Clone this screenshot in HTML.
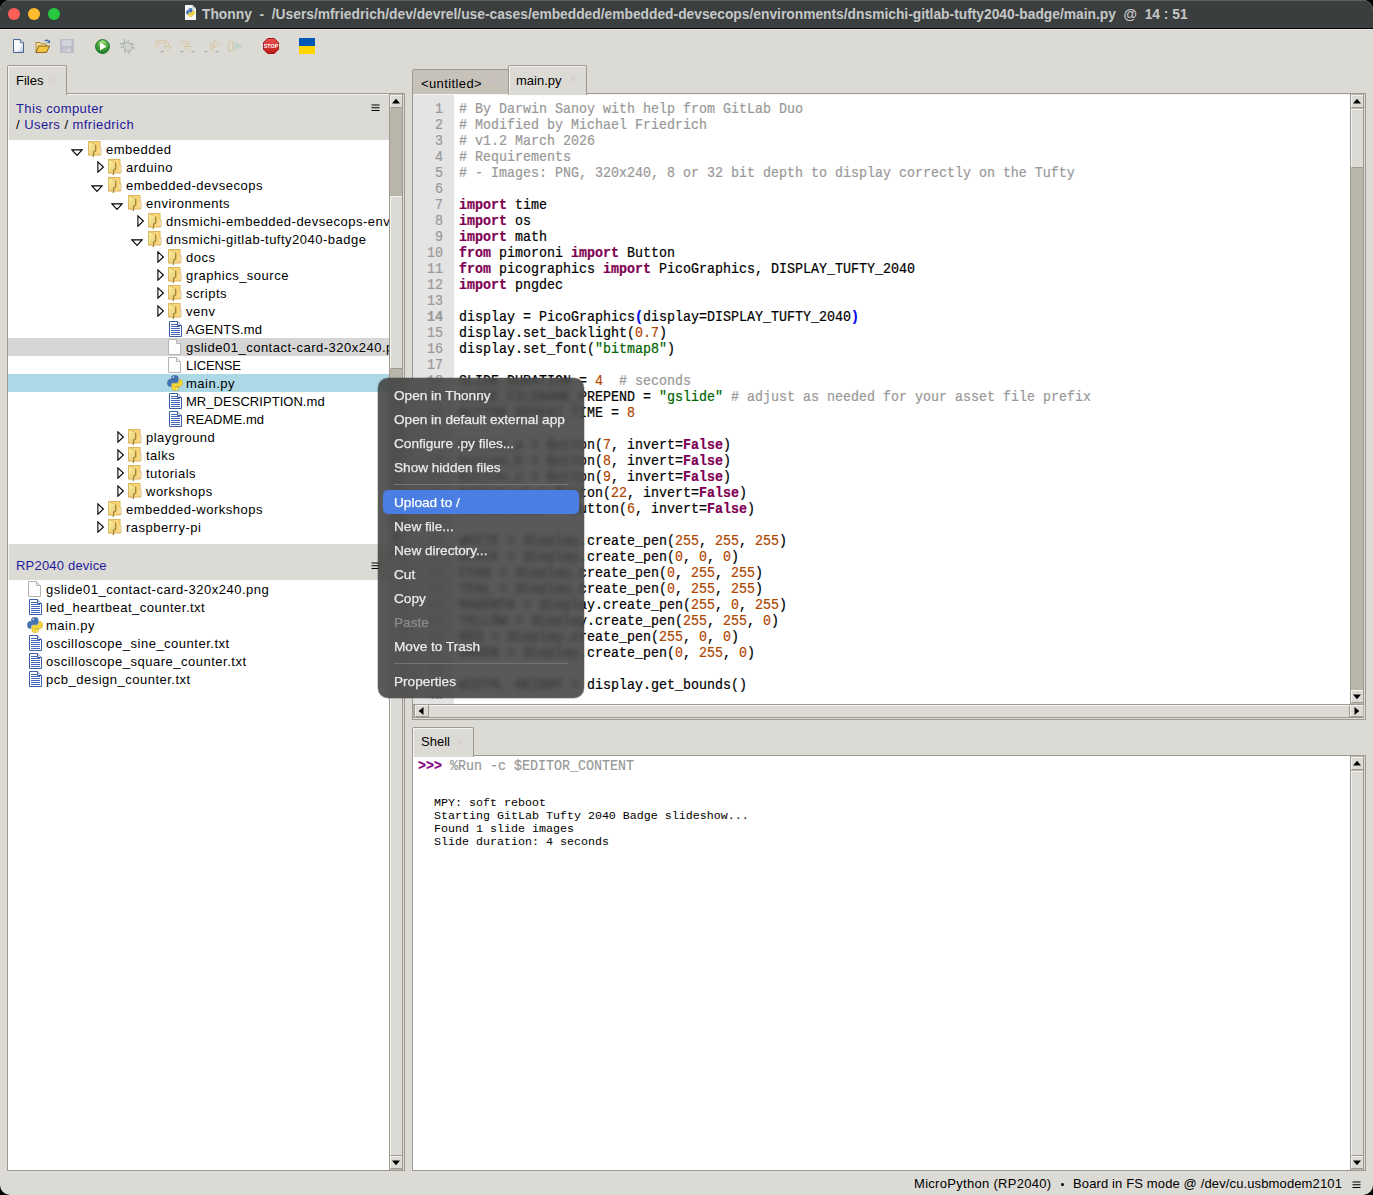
<!DOCTYPE html><html><head><meta charset="utf-8"><style>

*{box-sizing:border-box}
html,body{margin:0;padding:0;background:#000}
body{width:1373px;height:1195px;position:relative;overflow:hidden;font-family:'Liberation Sans', sans-serif;}
svg{display:block}
.a{position:absolute}
.t{position:absolute;white-space:pre;line-height:18px}
.code{position:absolute;font-family:'Liberation Mono', monospace;font-size:13.33px;line-height:14.2857px;white-space:pre;color:#000;transform:scaleY(1.12);transform-origin:0 0;-webkit-text-stroke:0.2px currentColor}
.cm{color:#999999}.kw{color:#7f0055;font-weight:bold}.nu{color:#b04600}.st{color:#006400}
.btn{background:#dcdad5;border-top:1px solid #f4f3ef;border-left:1px solid #f4f3ef;border-bottom:1px solid #9e9a91;border-right:0}
.thumb{background:#dcdad5;border-top:1px solid #f4f3ef;border-left:1px solid #f4f3ef;border-bottom:1px solid #9e9a91}
.mi{position:absolute;left:394px;color:#ececec;font-size:13.6px;line-height:18px;white-space:pre;-webkit-text-stroke:0.25px currentColor}
.frame{position:absolute;border:1px solid #9e9a91;background:#dcdad5}
.tab{position:absolute;border:1px solid #9e9a91;border-bottom:none;background:#dcdad5;border-radius:2px 2px 0 0;box-shadow:inset 1px 1px 0 #f4f3ef}

</style></head><body>
<div class="a" style="left:0;top:0;width:1373px;height:1195px;background:#dcdad5;border-radius:10px;overflow:hidden">
<div class="a" style="left:0;top:0;width:1373px;height:29px;background:#3a3e3f;border-top:1px solid #5c6061;border-bottom:1px solid #000"></div>
<div class="a" style="left:8px;top:8px;width:12px;height:12px;border-radius:50%;background:#fe5f57"></div>
<div class="a" style="left:28px;top:8px;width:12px;height:12px;border-radius:50%;background:#febc2e"></div>
<div class="a" style="left:48px;top:8px;width:12px;height:12px;border-radius:50%;background:#28c840"></div>
<svg class="a" style="left:185px;top:5px" width="11" height="15" viewBox="0 0 11 15"><path d="M0 0 L7.5 0 L11 3.5 L11 15 L0 15 Z" fill="#f6f6f6"/><path d="M7.5 0 L7.5 3.5 L11 3.5 Z" fill="#bdbdbd"/></svg>
<div class="a" style="left:186px;top:8px"><svg width="9" height="9" viewBox="0 0 16 16"><path d="M7.8 0.6 C4.4 0.6 4.6 2.1 4.6 2.1 L4.6 3.9 L8 3.9 L8 4.5 L2.9 4.5 C2.9 4.5 0.6 4.3 0.6 7.9 C0.6 11.4 2.6 11.3 2.6 11.3 L4 11.3 L4 9.5 C4 9.5 3.9 7.6 5.9 7.6 L9.3 7.6 C9.3 7.6 11.1 7.6 11.1 5.8 L11.1 2.6 C11.1 2.6 11.4 0.6 7.8 0.6 Z" fill="#4474b4" stroke="#2e5a92" stroke-width="0.6"/><path d="M8.2 15.4 C11.6 15.4 11.4 13.9 11.4 13.9 L11.4 12.1 L8 12.1 L8 11.5 L13.1 11.5 C13.1 11.5 15.4 11.7 15.4 8.1 C15.4 4.6 13.4 4.7 13.4 4.7 L12 4.7 L12 6.5 C12 6.5 12.1 8.4 10.1 8.4 L6.7 8.4 C6.7 8.4 4.9 8.4 4.9 10.2 L4.9 13.4 C4.9 13.4 4.6 15.4 8.2 15.4 Z" fill="#f6d93e" stroke="#c8a200" stroke-width="0.6"/><circle cx="6.2" cy="2.3" r="0.8" fill="#fff"/><circle cx="9.8" cy="13.7" r="0.8" fill="#fff"/></svg></div>
<div class="t" style="left:202px;top:6px;font-size:13.8px;font-weight:bold;color:#c6c8c8;line-height:18px">Thonny  -  /Users/mfriedrich/dev/devrel/use-cases/embedded/embedded-devsecops/environments/dnsmichi-gitlab-tufty2040-badge/main.py  @  14 : 51</div>
<div class="a" style="left:0;top:29px;width:1373px;height:1px;background:#e9e7e3"></div>
<svg class="a" style="left:13px;top:39px" width="11" height="14" viewBox="0 0 12 15"><defs><linearGradient id="gnf" x1="0" y1="0" x2="1" y2="1"><stop offset="0" stop-color="#ffffff"/><stop offset="0.6" stop-color="#f4f6fa"/><stop offset="1" stop-color="#b8c4dc"/></linearGradient></defs><path d="M0.5 0.5 L8 0.5 L11.5 4 L11.5 14.5 L0.5 14.5 Z" fill="url(#gnf)" stroke="#2d4f86" stroke-width="1"/><path d="M8 0.5 L8 4 L11.5 4" fill="#dde4f0" stroke="#2d4f86" stroke-width="0.8"/></svg><svg class="a" style="left:35px;top:39px" width="16" height="14" viewBox="0 0 17 16"><path d="M10.5 2.5 Q12.5 0.2 14.5 2" fill="none" stroke="#3a62a8" stroke-width="1.4"/><path d="M16.5 0.8 L16.5 4.5 L12.8 4.5 Z" fill="#3a62a8"/><path d="M0.5 4 L5 4 L6 5.5 L12 5.5 L12 8 L0.5 15.5 Z" fill="#f3dc8e" stroke="#a7842e" stroke-width="1"/><path d="M3.5 8 L16 8 L12.5 15.5 L0.5 15.5 Z" fill="#f2c444" stroke="#7b5610" stroke-width="1"/></svg><svg class="a" style="left:60px;top:39px" width="14" height="14" viewBox="0 0 14 14"><rect x="0" y="0" width="14" height="14" rx="0.5" fill="#bbbdc9"/><rect x="2.5" y="1" width="9" height="6" fill="#d3d4d9"/><rect x="3.5" y="9.5" width="7" height="3.5" fill="#d3d4d9"/><rect x="4.5" y="10" width="2" height="2.5" fill="#bbbdc9"/></svg><svg class="a" style="left:95px;top:39px" width="15" height="15" viewBox="0 0 15 15"><defs><radialGradient id="grun" cx="0.5" cy="0.15" r="0.85"><stop offset="0" stop-color="#a6e07a"/><stop offset="0.5" stop-color="#4aa83c"/><stop offset="1" stop-color="#1c7a26"/></radialGradient></defs><circle cx="7.5" cy="7.5" r="6.9" fill="url(#grun)" stroke="#167028" stroke-width="1"/><path d="M5 3.4 L11.6 7.5 L5 11.6 Z" fill="#fff"/></svg><svg class="a" style="left:116px;top:36px" width="24" height="22" viewBox="0 0 24 22"><g stroke="#a6afae" stroke-width="1.1" fill="none" stroke-linecap="round"><path d="M8.5 3.3 L8.5 6.5 L9.5 7.5"/><path d="M12.5 4.6 L11.4 6.8"/><path d="M4.2 7.6 L7.9 7.6"/><path d="M5.3 11.6 L7.9 10.2"/><path d="M8.5 13.3 L9.4 16.6"/><path d="M12.5 15 L12.6 16.6 L13.4 17.5"/><path d="M14.4 7.4 L16 7.6 L17.7 8.5"/><path d="M15.8 11.4 L17.5 11.6 L18.6 12.5"/></g><ellipse cx="11.8" cy="10.8" rx="3.7" ry="4.7" fill="#d2d5ce" stroke="#aab4b3" stroke-width="1.1" transform="rotate(-38 11.8 10.8)"/></svg><svg class="a" style="left:150px;top:36px" width="100" height="20" viewBox="0 0 100 20"><g fill="none" stroke-linecap="butt" stroke-linejoin="round"><path d="M6.7 10.9 L6.7 8 Q6.7 5.8 9 5.8 L15 5.8 Q17.5 5.8 17.5 8 L17.5 10.5" stroke="#d3c6a8" stroke-width="3"/><path d="M6.7 10.9 L6.7 8 Q6.7 5.8 9 5.8 L15 5.8 Q17.5 5.8 17.5 8 L17.5 10.5" stroke="#e5e0d4" stroke-width="1.1"/><path d="M30.8 6.4 L36.5 6.4 Q37.5 6.4 37.5 7.5 L37.5 10.5" stroke="#d3c6a8" stroke-width="3"/><path d="M30.8 6.4 L36.5 6.4 Q37.5 6.4 37.5 7.5 L37.5 10.5" stroke="#e5e0d4" stroke-width="1.1"/><path d="M61.4 15.2 L61.4 9.5 Q61.4 8.4 62.6 8.4 L64.5 8.4" stroke="#d3c6a8" stroke-width="3"/><path d="M61.4 15.2 L61.4 9.5 Q61.4 8.4 62.6 8.4 L64.5 8.4" stroke="#e5e0d4" stroke-width="1.1"/></g><path d="M14 10.6 L21 10.6 L17.5 14.6 Z" fill="#e5e0d4" stroke="#d3c6a8" stroke-width="1"/><path d="M34 10.6 L41 10.6 L37.5 14.6 Z" fill="#e5e0d4" stroke="#d3c6a8" stroke-width="1"/><path d="M64.2 4.9 L68.9 8.4 L64.2 11.9 Z" fill="#e5e0d4" stroke="#d3c6a8" stroke-width="1"/><g fill="#a9b1b9"><path d="M9.8 16.2 Q12 13 14.2 16.2 Z"/><path d="M29.8 16.2 Q32 13 34.2 16.2 Z"/><path d="M41 16.2 Q43 13 45 16.2 Z"/><path d="M54 16.2 Q56 13 58 16.2 Z"/><path d="M65 16.2 Q67 13 69 16.2 Z"/></g><rect x="78.9" y="5.6" width="3.8" height="9.3" fill="#e1dccf" stroke="#d3c6a6" stroke-width="1"/><path d="M84.2 5.5 L93 10.2 L84.2 14.9 Z" fill="#c4d1c5"/></svg><svg class="a" style="left:263px;top:38px" width="16" height="16" viewBox="0 0 16 16"><defs><linearGradient id="gstop" x1="0" y1="0" x2="0" y2="1"><stop offset="0" stop-color="#ee5050"/><stop offset="1" stop-color="#c01818"/></linearGradient></defs><path d="M4.7 0.5 L11.3 0.5 L15.5 4.7 L15.5 11.3 L11.3 15.5 L4.7 15.5 L0.5 11.3 L0.5 4.7 Z" fill="url(#gstop)" stroke="#a01818" stroke-width="1"/><text x="8" y="10.2" text-anchor="middle" font-family="Liberation Sans" font-weight="bold" font-size="5.4" fill="#fff">STOP</text></svg><div class="a" style="left:299px;top:38px;width:16px;height:8px;background:#0057b7"></div><div class="a" style="left:299px;top:46px;width:16px;height:8px;background:#ffd500"></div>
<div class="frame" style="left:7px;top:93px;width:398px;height:1078px;box-shadow:inset 1px 1px 0 #f4f3ef"></div>
<div class="tab" style="left:7px;top:65px;width:60px;height:30px"></div>
<div class="t" style="left:16px;top:72px;font-size:13px;color:#000">Files</div>
<svg class="a" style="left:50px;top:77px" width="6" height="6" viewBox="0 0 6 6"><path d="M0.5 0.5 L5.5 5.5 M5.5 0.5 L0.5 5.5" stroke="#d4bcd6" stroke-width="0.8"/></svg>
<div class="t" style="left:16px;top:101px;font-size:13px;letter-spacing:0.4px;color:#1c1a9a;line-height:16px">This computer</div>
<div class="t" style="left:16px;top:117px;font-size:13px;letter-spacing:0.45px;color:#000;line-height:16px">/ <span style="color:#1c1a9a">Users</span> / <span style="color:#1c1a9a">mfriedrich</span></div>
<svg class="a" style="left:371px;top:104px" width="9" height="8" viewBox="0 0 9 8"><path d="M0.5 1 H8.5 M0.5 3.7 H8.5 M0.5 6.5 H8.5" stroke="#000" stroke-width="1.1"/></svg>
<div class="a" style="left:8px;top:140px;width:381px;height:404px;background:#fff"></div>
<div class="a" style="left:0;top:0;width:389px;height:1195px;overflow:hidden">
<div class="a" style="left:71px;top:149px"><svg width="12" height="8" viewBox="0 0 12 8"><path d="M0.9 0.9 L11.1 0.9 L6 6.4 Z" fill="#fff" stroke="#000" stroke-width="1.1"/></svg></div>
<div class="a" style="left:88px;top:141px"><svg width="15" height="17" viewBox="0 0 15 17"><defs><linearGradient id="fg" x1="0" y1="0" x2="0.6" y2="1"><stop offset="0" stop-color="#fff59e"/><stop offset="1" stop-color="#e6c777"/></linearGradient></defs><rect x="0.5" y="0.5" width="11.5" height="13.5" fill="#fbd77a" stroke="#dcb760" stroke-width="1"/><rect x="11.6" y="7" width="1.2" height="5.8" fill="#ffffff"/><path d="M12 6.8 L13 6.8 L13 13.6 L11.5 13.6" fill="none" stroke="#d7b260" stroke-width="0.9"/><path d="M0.5 0.6 L7.9 3.6 L7.9 10 L6 10.8 L5.4 15.8 L3.2 13.8 L0.5 13.4 Z" fill="url(#fg)" stroke="#d6b25e" stroke-width="0.8"/><path d="M7.7 3.9 L7.7 10 L5.9 10.9 L5.4 15.8" fill="none" stroke="#9d7f33" stroke-width="1.1"/></svg></div>
<div class="t" style="left:106px;top:140.6px;font-size:13px;letter-spacing:0.500px;color:#000">embedded</div>
<div class="a" style="left:97px;top:161px"><svg width="8" height="12" viewBox="0 0 8 12"><path d="M0.9 0.8 L6.4 6 L0.9 11.2 Z" fill="#fff" stroke="#000" stroke-width="1.1"/></svg></div>
<div class="a" style="left:108px;top:159px"><svg width="15" height="17" viewBox="0 0 15 17"><defs><linearGradient id="fg" x1="0" y1="0" x2="0.6" y2="1"><stop offset="0" stop-color="#fff59e"/><stop offset="1" stop-color="#e6c777"/></linearGradient></defs><rect x="0.5" y="0.5" width="11.5" height="13.5" fill="#fbd77a" stroke="#dcb760" stroke-width="1"/><rect x="11.6" y="7" width="1.2" height="5.8" fill="#ffffff"/><path d="M12 6.8 L13 6.8 L13 13.6 L11.5 13.6" fill="none" stroke="#d7b260" stroke-width="0.9"/><path d="M0.5 0.6 L7.9 3.6 L7.9 10 L6 10.8 L5.4 15.8 L3.2 13.8 L0.5 13.4 Z" fill="url(#fg)" stroke="#d6b25e" stroke-width="0.8"/><path d="M7.7 3.9 L7.7 10 L5.9 10.9 L5.4 15.8" fill="none" stroke="#9d7f33" stroke-width="1.1"/></svg></div>
<div class="t" style="left:126px;top:158.6px;font-size:13px;letter-spacing:0.500px;color:#000">arduino</div>
<div class="a" style="left:91px;top:185px"><svg width="12" height="8" viewBox="0 0 12 8"><path d="M0.9 0.9 L11.1 0.9 L6 6.4 Z" fill="#fff" stroke="#000" stroke-width="1.1"/></svg></div>
<div class="a" style="left:108px;top:177px"><svg width="15" height="17" viewBox="0 0 15 17"><defs><linearGradient id="fg" x1="0" y1="0" x2="0.6" y2="1"><stop offset="0" stop-color="#fff59e"/><stop offset="1" stop-color="#e6c777"/></linearGradient></defs><rect x="0.5" y="0.5" width="11.5" height="13.5" fill="#fbd77a" stroke="#dcb760" stroke-width="1"/><rect x="11.6" y="7" width="1.2" height="5.8" fill="#ffffff"/><path d="M12 6.8 L13 6.8 L13 13.6 L11.5 13.6" fill="none" stroke="#d7b260" stroke-width="0.9"/><path d="M0.5 0.6 L7.9 3.6 L7.9 10 L6 10.8 L5.4 15.8 L3.2 13.8 L0.5 13.4 Z" fill="url(#fg)" stroke="#d6b25e" stroke-width="0.8"/><path d="M7.7 3.9 L7.7 10 L5.9 10.9 L5.4 15.8" fill="none" stroke="#9d7f33" stroke-width="1.1"/></svg></div>
<div class="t" style="left:126px;top:176.6px;font-size:13px;letter-spacing:0.500px;color:#000">embedded-devsecops</div>
<div class="a" style="left:111px;top:203px"><svg width="12" height="8" viewBox="0 0 12 8"><path d="M0.9 0.9 L11.1 0.9 L6 6.4 Z" fill="#fff" stroke="#000" stroke-width="1.1"/></svg></div>
<div class="a" style="left:128px;top:195px"><svg width="15" height="17" viewBox="0 0 15 17"><defs><linearGradient id="fg" x1="0" y1="0" x2="0.6" y2="1"><stop offset="0" stop-color="#fff59e"/><stop offset="1" stop-color="#e6c777"/></linearGradient></defs><rect x="0.5" y="0.5" width="11.5" height="13.5" fill="#fbd77a" stroke="#dcb760" stroke-width="1"/><rect x="11.6" y="7" width="1.2" height="5.8" fill="#ffffff"/><path d="M12 6.8 L13 6.8 L13 13.6 L11.5 13.6" fill="none" stroke="#d7b260" stroke-width="0.9"/><path d="M0.5 0.6 L7.9 3.6 L7.9 10 L6 10.8 L5.4 15.8 L3.2 13.8 L0.5 13.4 Z" fill="url(#fg)" stroke="#d6b25e" stroke-width="0.8"/><path d="M7.7 3.9 L7.7 10 L5.9 10.9 L5.4 15.8" fill="none" stroke="#9d7f33" stroke-width="1.1"/></svg></div>
<div class="t" style="left:146px;top:194.6px;font-size:13px;letter-spacing:0.500px;color:#000">environments</div>
<div class="a" style="left:137px;top:215px"><svg width="8" height="12" viewBox="0 0 8 12"><path d="M0.9 0.8 L6.4 6 L0.9 11.2 Z" fill="#fff" stroke="#000" stroke-width="1.1"/></svg></div>
<div class="a" style="left:148px;top:213px"><svg width="15" height="17" viewBox="0 0 15 17"><defs><linearGradient id="fg" x1="0" y1="0" x2="0.6" y2="1"><stop offset="0" stop-color="#fff59e"/><stop offset="1" stop-color="#e6c777"/></linearGradient></defs><rect x="0.5" y="0.5" width="11.5" height="13.5" fill="#fbd77a" stroke="#dcb760" stroke-width="1"/><rect x="11.6" y="7" width="1.2" height="5.8" fill="#ffffff"/><path d="M12 6.8 L13 6.8 L13 13.6 L11.5 13.6" fill="none" stroke="#d7b260" stroke-width="0.9"/><path d="M0.5 0.6 L7.9 3.6 L7.9 10 L6 10.8 L5.4 15.8 L3.2 13.8 L0.5 13.4 Z" fill="url(#fg)" stroke="#d6b25e" stroke-width="0.8"/><path d="M7.7 3.9 L7.7 10 L5.9 10.9 L5.4 15.8" fill="none" stroke="#9d7f33" stroke-width="1.1"/></svg></div>
<div class="t" style="left:166px;top:212.6px;font-size:13px;letter-spacing:0.500px;color:#000">dnsmichi-embedded-devsecops-env</div>
<div class="a" style="left:131px;top:239px"><svg width="12" height="8" viewBox="0 0 12 8"><path d="M0.9 0.9 L11.1 0.9 L6 6.4 Z" fill="#fff" stroke="#000" stroke-width="1.1"/></svg></div>
<div class="a" style="left:148px;top:231px"><svg width="15" height="17" viewBox="0 0 15 17"><defs><linearGradient id="fg" x1="0" y1="0" x2="0.6" y2="1"><stop offset="0" stop-color="#fff59e"/><stop offset="1" stop-color="#e6c777"/></linearGradient></defs><rect x="0.5" y="0.5" width="11.5" height="13.5" fill="#fbd77a" stroke="#dcb760" stroke-width="1"/><rect x="11.6" y="7" width="1.2" height="5.8" fill="#ffffff"/><path d="M12 6.8 L13 6.8 L13 13.6 L11.5 13.6" fill="none" stroke="#d7b260" stroke-width="0.9"/><path d="M0.5 0.6 L7.9 3.6 L7.9 10 L6 10.8 L5.4 15.8 L3.2 13.8 L0.5 13.4 Z" fill="url(#fg)" stroke="#d6b25e" stroke-width="0.8"/><path d="M7.7 3.9 L7.7 10 L5.9 10.9 L5.4 15.8" fill="none" stroke="#9d7f33" stroke-width="1.1"/></svg></div>
<div class="t" style="left:166px;top:230.6px;font-size:13px;letter-spacing:0.500px;color:#000">dnsmichi-gitlab-tufty2040-badge</div>
<div class="a" style="left:157px;top:251px"><svg width="8" height="12" viewBox="0 0 8 12"><path d="M0.9 0.8 L6.4 6 L0.9 11.2 Z" fill="#fff" stroke="#000" stroke-width="1.1"/></svg></div>
<div class="a" style="left:168px;top:249px"><svg width="15" height="17" viewBox="0 0 15 17"><defs><linearGradient id="fg" x1="0" y1="0" x2="0.6" y2="1"><stop offset="0" stop-color="#fff59e"/><stop offset="1" stop-color="#e6c777"/></linearGradient></defs><rect x="0.5" y="0.5" width="11.5" height="13.5" fill="#fbd77a" stroke="#dcb760" stroke-width="1"/><rect x="11.6" y="7" width="1.2" height="5.8" fill="#ffffff"/><path d="M12 6.8 L13 6.8 L13 13.6 L11.5 13.6" fill="none" stroke="#d7b260" stroke-width="0.9"/><path d="M0.5 0.6 L7.9 3.6 L7.9 10 L6 10.8 L5.4 15.8 L3.2 13.8 L0.5 13.4 Z" fill="url(#fg)" stroke="#d6b25e" stroke-width="0.8"/><path d="M7.7 3.9 L7.7 10 L5.9 10.9 L5.4 15.8" fill="none" stroke="#9d7f33" stroke-width="1.1"/></svg></div>
<div class="t" style="left:186px;top:248.6px;font-size:13px;letter-spacing:0.500px;color:#000">docs</div>
<div class="a" style="left:157px;top:269px"><svg width="8" height="12" viewBox="0 0 8 12"><path d="M0.9 0.8 L6.4 6 L0.9 11.2 Z" fill="#fff" stroke="#000" stroke-width="1.1"/></svg></div>
<div class="a" style="left:168px;top:267px"><svg width="15" height="17" viewBox="0 0 15 17"><defs><linearGradient id="fg" x1="0" y1="0" x2="0.6" y2="1"><stop offset="0" stop-color="#fff59e"/><stop offset="1" stop-color="#e6c777"/></linearGradient></defs><rect x="0.5" y="0.5" width="11.5" height="13.5" fill="#fbd77a" stroke="#dcb760" stroke-width="1"/><rect x="11.6" y="7" width="1.2" height="5.8" fill="#ffffff"/><path d="M12 6.8 L13 6.8 L13 13.6 L11.5 13.6" fill="none" stroke="#d7b260" stroke-width="0.9"/><path d="M0.5 0.6 L7.9 3.6 L7.9 10 L6 10.8 L5.4 15.8 L3.2 13.8 L0.5 13.4 Z" fill="url(#fg)" stroke="#d6b25e" stroke-width="0.8"/><path d="M7.7 3.9 L7.7 10 L5.9 10.9 L5.4 15.8" fill="none" stroke="#9d7f33" stroke-width="1.1"/></svg></div>
<div class="t" style="left:186px;top:266.6px;font-size:13px;letter-spacing:0.500px;color:#000">graphics_source</div>
<div class="a" style="left:157px;top:287px"><svg width="8" height="12" viewBox="0 0 8 12"><path d="M0.9 0.8 L6.4 6 L0.9 11.2 Z" fill="#fff" stroke="#000" stroke-width="1.1"/></svg></div>
<div class="a" style="left:168px;top:285px"><svg width="15" height="17" viewBox="0 0 15 17"><defs><linearGradient id="fg" x1="0" y1="0" x2="0.6" y2="1"><stop offset="0" stop-color="#fff59e"/><stop offset="1" stop-color="#e6c777"/></linearGradient></defs><rect x="0.5" y="0.5" width="11.5" height="13.5" fill="#fbd77a" stroke="#dcb760" stroke-width="1"/><rect x="11.6" y="7" width="1.2" height="5.8" fill="#ffffff"/><path d="M12 6.8 L13 6.8 L13 13.6 L11.5 13.6" fill="none" stroke="#d7b260" stroke-width="0.9"/><path d="M0.5 0.6 L7.9 3.6 L7.9 10 L6 10.8 L5.4 15.8 L3.2 13.8 L0.5 13.4 Z" fill="url(#fg)" stroke="#d6b25e" stroke-width="0.8"/><path d="M7.7 3.9 L7.7 10 L5.9 10.9 L5.4 15.8" fill="none" stroke="#9d7f33" stroke-width="1.1"/></svg></div>
<div class="t" style="left:186px;top:284.6px;font-size:13px;letter-spacing:0.500px;color:#000">scripts</div>
<div class="a" style="left:157px;top:305px"><svg width="8" height="12" viewBox="0 0 8 12"><path d="M0.9 0.8 L6.4 6 L0.9 11.2 Z" fill="#fff" stroke="#000" stroke-width="1.1"/></svg></div>
<div class="a" style="left:168px;top:303px"><svg width="15" height="17" viewBox="0 0 15 17"><defs><linearGradient id="fg" x1="0" y1="0" x2="0.6" y2="1"><stop offset="0" stop-color="#fff59e"/><stop offset="1" stop-color="#e6c777"/></linearGradient></defs><rect x="0.5" y="0.5" width="11.5" height="13.5" fill="#fbd77a" stroke="#dcb760" stroke-width="1"/><rect x="11.6" y="7" width="1.2" height="5.8" fill="#ffffff"/><path d="M12 6.8 L13 6.8 L13 13.6 L11.5 13.6" fill="none" stroke="#d7b260" stroke-width="0.9"/><path d="M0.5 0.6 L7.9 3.6 L7.9 10 L6 10.8 L5.4 15.8 L3.2 13.8 L0.5 13.4 Z" fill="url(#fg)" stroke="#d6b25e" stroke-width="0.8"/><path d="M7.7 3.9 L7.7 10 L5.9 10.9 L5.4 15.8" fill="none" stroke="#9d7f33" stroke-width="1.1"/></svg></div>
<div class="t" style="left:186px;top:302.6px;font-size:13px;letter-spacing:0.500px;color:#000">venv</div>
<div class="a" style="left:169px;top:321px"><svg width="13" height="16" viewBox="0 0 13 16"><path d="M0.5 0.5 L8.5 0.5 L12.5 4.5 L12.5 15.5 L0.5 15.5 Z" fill="#fdfdfd" stroke="#3c5ea6" stroke-width="1"/><path d="M8.5 0.5 L8.5 4.5 L12.5 4.5" fill="#eaeaea" stroke="#3c5ea6" stroke-width="1"/><line x1="2" y1="3.5" x2="8" y2="3.5" stroke="#4466bb" stroke-width="1"/><line x1="2" y1="5.5" x2="11" y2="5.5" stroke="#4466bb" stroke-width="1"/><line x1="2" y1="7.5" x2="11" y2="7.5" stroke="#4466bb" stroke-width="1"/><line x1="2" y1="9.5" x2="11" y2="9.5" stroke="#4466bb" stroke-width="1"/><line x1="2" y1="11.5" x2="11" y2="11.5" stroke="#4466bb" stroke-width="1"/><line x1="2" y1="13.5" x2="11" y2="13.5" stroke="#4466bb" stroke-width="1"/></svg></div>
<div class="t" style="left:186px;top:320.6px;font-size:13px;letter-spacing:0.100px;color:#000">AGENTS.md</div>
<div class="a" style="left:8px;top:338px;width:381px;height:18px;background:#d6d6d6"></div>
<div class="a" style="left:168px;top:339px"><svg width="13" height="16" viewBox="0 0 13 16"><path d="M0.5 0.5 L8.5 0.5 L12.5 4.5 L12.5 15.5 L0.5 15.5 Z" fill="#fdfdfd" stroke="#b4b4b4" stroke-width="1"/><path d="M8.5 0.5 L8.5 4.5 L12.5 4.5" fill="#eaeaea" stroke="#b4b4b4" stroke-width="1"/></svg></div>
<div class="t" style="left:186px;top:338.6px;font-size:13px;letter-spacing:0.500px;color:#000">gslide01_contact-card-320x240.png</div>
<div class="a" style="left:168px;top:357px"><svg width="13" height="16" viewBox="0 0 13 16"><path d="M0.5 0.5 L8.5 0.5 L12.5 4.5 L12.5 15.5 L0.5 15.5 Z" fill="#fdfdfd" stroke="#b4b4b4" stroke-width="1"/><path d="M8.5 0.5 L8.5 4.5 L12.5 4.5" fill="#eaeaea" stroke="#b4b4b4" stroke-width="1"/></svg></div>
<div class="t" style="left:186px;top:356.6px;font-size:13px;letter-spacing:-0.100px;color:#000">LICENSE</div>
<div class="a" style="left:8px;top:374px;width:381px;height:18px;background:#add8e6"></div>
<div class="a" style="left:167px;top:375px"><svg width="16" height="16" viewBox="0 0 16 16"><path d="M7.8 0.6 C4.4 0.6 4.6 2.1 4.6 2.1 L4.6 3.9 L8 3.9 L8 4.5 L2.9 4.5 C2.9 4.5 0.6 4.3 0.6 7.9 C0.6 11.4 2.6 11.3 2.6 11.3 L4 11.3 L4 9.5 C4 9.5 3.9 7.6 5.9 7.6 L9.3 7.6 C9.3 7.6 11.1 7.6 11.1 5.8 L11.1 2.6 C11.1 2.6 11.4 0.6 7.8 0.6 Z" fill="#4474b4" stroke="#2e5a92" stroke-width="0.6"/><path d="M8.2 15.4 C11.6 15.4 11.4 13.9 11.4 13.9 L11.4 12.1 L8 12.1 L8 11.5 L13.1 11.5 C13.1 11.5 15.4 11.7 15.4 8.1 C15.4 4.6 13.4 4.7 13.4 4.7 L12 4.7 L12 6.5 C12 6.5 12.1 8.4 10.1 8.4 L6.7 8.4 C6.7 8.4 4.9 8.4 4.9 10.2 L4.9 13.4 C4.9 13.4 4.6 15.4 8.2 15.4 Z" fill="#f6d93e" stroke="#c8a200" stroke-width="0.6"/><circle cx="6.2" cy="2.3" r="0.8" fill="#fff"/><circle cx="9.8" cy="13.7" r="0.8" fill="#fff"/></svg></div>
<div class="t" style="left:186px;top:374.6px;font-size:13px;letter-spacing:0.500px;color:#000">main.py</div>
<div class="a" style="left:169px;top:393px"><svg width="13" height="16" viewBox="0 0 13 16"><path d="M0.5 0.5 L8.5 0.5 L12.5 4.5 L12.5 15.5 L0.5 15.5 Z" fill="#fdfdfd" stroke="#3c5ea6" stroke-width="1"/><path d="M8.5 0.5 L8.5 4.5 L12.5 4.5" fill="#eaeaea" stroke="#3c5ea6" stroke-width="1"/><line x1="2" y1="3.5" x2="8" y2="3.5" stroke="#4466bb" stroke-width="1"/><line x1="2" y1="5.5" x2="11" y2="5.5" stroke="#4466bb" stroke-width="1"/><line x1="2" y1="7.5" x2="11" y2="7.5" stroke="#4466bb" stroke-width="1"/><line x1="2" y1="9.5" x2="11" y2="9.5" stroke="#4466bb" stroke-width="1"/><line x1="2" y1="11.5" x2="11" y2="11.5" stroke="#4466bb" stroke-width="1"/><line x1="2" y1="13.5" x2="11" y2="13.5" stroke="#4466bb" stroke-width="1"/></svg></div>
<div class="t" style="left:186px;top:392.6px;font-size:13px;letter-spacing:0.041px;color:#000">MR_DESCRIPTION.md</div>
<div class="a" style="left:169px;top:411px"><svg width="13" height="16" viewBox="0 0 13 16"><path d="M0.5 0.5 L8.5 0.5 L12.5 4.5 L12.5 15.5 L0.5 15.5 Z" fill="#fdfdfd" stroke="#3c5ea6" stroke-width="1"/><path d="M8.5 0.5 L8.5 4.5 L12.5 4.5" fill="#eaeaea" stroke="#3c5ea6" stroke-width="1"/><line x1="2" y1="3.5" x2="8" y2="3.5" stroke="#4466bb" stroke-width="1"/><line x1="2" y1="5.5" x2="11" y2="5.5" stroke="#4466bb" stroke-width="1"/><line x1="2" y1="7.5" x2="11" y2="7.5" stroke="#4466bb" stroke-width="1"/><line x1="2" y1="9.5" x2="11" y2="9.5" stroke="#4466bb" stroke-width="1"/><line x1="2" y1="11.5" x2="11" y2="11.5" stroke="#4466bb" stroke-width="1"/><line x1="2" y1="13.5" x2="11" y2="13.5" stroke="#4466bb" stroke-width="1"/></svg></div>
<div class="t" style="left:186px;top:410.6px;font-size:13px;letter-spacing:0.100px;color:#000">README.md</div>
<div class="a" style="left:117px;top:431px"><svg width="8" height="12" viewBox="0 0 8 12"><path d="M0.9 0.8 L6.4 6 L0.9 11.2 Z" fill="#fff" stroke="#000" stroke-width="1.1"/></svg></div>
<div class="a" style="left:128px;top:429px"><svg width="15" height="17" viewBox="0 0 15 17"><defs><linearGradient id="fg" x1="0" y1="0" x2="0.6" y2="1"><stop offset="0" stop-color="#fff59e"/><stop offset="1" stop-color="#e6c777"/></linearGradient></defs><rect x="0.5" y="0.5" width="11.5" height="13.5" fill="#fbd77a" stroke="#dcb760" stroke-width="1"/><rect x="11.6" y="7" width="1.2" height="5.8" fill="#ffffff"/><path d="M12 6.8 L13 6.8 L13 13.6 L11.5 13.6" fill="none" stroke="#d7b260" stroke-width="0.9"/><path d="M0.5 0.6 L7.9 3.6 L7.9 10 L6 10.8 L5.4 15.8 L3.2 13.8 L0.5 13.4 Z" fill="url(#fg)" stroke="#d6b25e" stroke-width="0.8"/><path d="M7.7 3.9 L7.7 10 L5.9 10.9 L5.4 15.8" fill="none" stroke="#9d7f33" stroke-width="1.1"/></svg></div>
<div class="t" style="left:146px;top:428.6px;font-size:13px;letter-spacing:0.500px;color:#000">playground</div>
<div class="a" style="left:117px;top:449px"><svg width="8" height="12" viewBox="0 0 8 12"><path d="M0.9 0.8 L6.4 6 L0.9 11.2 Z" fill="#fff" stroke="#000" stroke-width="1.1"/></svg></div>
<div class="a" style="left:128px;top:447px"><svg width="15" height="17" viewBox="0 0 15 17"><defs><linearGradient id="fg" x1="0" y1="0" x2="0.6" y2="1"><stop offset="0" stop-color="#fff59e"/><stop offset="1" stop-color="#e6c777"/></linearGradient></defs><rect x="0.5" y="0.5" width="11.5" height="13.5" fill="#fbd77a" stroke="#dcb760" stroke-width="1"/><rect x="11.6" y="7" width="1.2" height="5.8" fill="#ffffff"/><path d="M12 6.8 L13 6.8 L13 13.6 L11.5 13.6" fill="none" stroke="#d7b260" stroke-width="0.9"/><path d="M0.5 0.6 L7.9 3.6 L7.9 10 L6 10.8 L5.4 15.8 L3.2 13.8 L0.5 13.4 Z" fill="url(#fg)" stroke="#d6b25e" stroke-width="0.8"/><path d="M7.7 3.9 L7.7 10 L5.9 10.9 L5.4 15.8" fill="none" stroke="#9d7f33" stroke-width="1.1"/></svg></div>
<div class="t" style="left:146px;top:446.6px;font-size:13px;letter-spacing:0.500px;color:#000">talks</div>
<div class="a" style="left:117px;top:467px"><svg width="8" height="12" viewBox="0 0 8 12"><path d="M0.9 0.8 L6.4 6 L0.9 11.2 Z" fill="#fff" stroke="#000" stroke-width="1.1"/></svg></div>
<div class="a" style="left:128px;top:465px"><svg width="15" height="17" viewBox="0 0 15 17"><defs><linearGradient id="fg" x1="0" y1="0" x2="0.6" y2="1"><stop offset="0" stop-color="#fff59e"/><stop offset="1" stop-color="#e6c777"/></linearGradient></defs><rect x="0.5" y="0.5" width="11.5" height="13.5" fill="#fbd77a" stroke="#dcb760" stroke-width="1"/><rect x="11.6" y="7" width="1.2" height="5.8" fill="#ffffff"/><path d="M12 6.8 L13 6.8 L13 13.6 L11.5 13.6" fill="none" stroke="#d7b260" stroke-width="0.9"/><path d="M0.5 0.6 L7.9 3.6 L7.9 10 L6 10.8 L5.4 15.8 L3.2 13.8 L0.5 13.4 Z" fill="url(#fg)" stroke="#d6b25e" stroke-width="0.8"/><path d="M7.7 3.9 L7.7 10 L5.9 10.9 L5.4 15.8" fill="none" stroke="#9d7f33" stroke-width="1.1"/></svg></div>
<div class="t" style="left:146px;top:464.6px;font-size:13px;letter-spacing:0.500px;color:#000">tutorials</div>
<div class="a" style="left:117px;top:485px"><svg width="8" height="12" viewBox="0 0 8 12"><path d="M0.9 0.8 L6.4 6 L0.9 11.2 Z" fill="#fff" stroke="#000" stroke-width="1.1"/></svg></div>
<div class="a" style="left:128px;top:483px"><svg width="15" height="17" viewBox="0 0 15 17"><defs><linearGradient id="fg" x1="0" y1="0" x2="0.6" y2="1"><stop offset="0" stop-color="#fff59e"/><stop offset="1" stop-color="#e6c777"/></linearGradient></defs><rect x="0.5" y="0.5" width="11.5" height="13.5" fill="#fbd77a" stroke="#dcb760" stroke-width="1"/><rect x="11.6" y="7" width="1.2" height="5.8" fill="#ffffff"/><path d="M12 6.8 L13 6.8 L13 13.6 L11.5 13.6" fill="none" stroke="#d7b260" stroke-width="0.9"/><path d="M0.5 0.6 L7.9 3.6 L7.9 10 L6 10.8 L5.4 15.8 L3.2 13.8 L0.5 13.4 Z" fill="url(#fg)" stroke="#d6b25e" stroke-width="0.8"/><path d="M7.7 3.9 L7.7 10 L5.9 10.9 L5.4 15.8" fill="none" stroke="#9d7f33" stroke-width="1.1"/></svg></div>
<div class="t" style="left:146px;top:482.6px;font-size:13px;letter-spacing:0.500px;color:#000">workshops</div>
<div class="a" style="left:97px;top:503px"><svg width="8" height="12" viewBox="0 0 8 12"><path d="M0.9 0.8 L6.4 6 L0.9 11.2 Z" fill="#fff" stroke="#000" stroke-width="1.1"/></svg></div>
<div class="a" style="left:108px;top:501px"><svg width="15" height="17" viewBox="0 0 15 17"><defs><linearGradient id="fg" x1="0" y1="0" x2="0.6" y2="1"><stop offset="0" stop-color="#fff59e"/><stop offset="1" stop-color="#e6c777"/></linearGradient></defs><rect x="0.5" y="0.5" width="11.5" height="13.5" fill="#fbd77a" stroke="#dcb760" stroke-width="1"/><rect x="11.6" y="7" width="1.2" height="5.8" fill="#ffffff"/><path d="M12 6.8 L13 6.8 L13 13.6 L11.5 13.6" fill="none" stroke="#d7b260" stroke-width="0.9"/><path d="M0.5 0.6 L7.9 3.6 L7.9 10 L6 10.8 L5.4 15.8 L3.2 13.8 L0.5 13.4 Z" fill="url(#fg)" stroke="#d6b25e" stroke-width="0.8"/><path d="M7.7 3.9 L7.7 10 L5.9 10.9 L5.4 15.8" fill="none" stroke="#9d7f33" stroke-width="1.1"/></svg></div>
<div class="t" style="left:126px;top:500.6px;font-size:13px;letter-spacing:0.500px;color:#000">embedded-workshops</div>
<div class="a" style="left:97px;top:521px"><svg width="8" height="12" viewBox="0 0 8 12"><path d="M0.9 0.8 L6.4 6 L0.9 11.2 Z" fill="#fff" stroke="#000" stroke-width="1.1"/></svg></div>
<div class="a" style="left:108px;top:519px"><svg width="15" height="17" viewBox="0 0 15 17"><defs><linearGradient id="fg" x1="0" y1="0" x2="0.6" y2="1"><stop offset="0" stop-color="#fff59e"/><stop offset="1" stop-color="#e6c777"/></linearGradient></defs><rect x="0.5" y="0.5" width="11.5" height="13.5" fill="#fbd77a" stroke="#dcb760" stroke-width="1"/><rect x="11.6" y="7" width="1.2" height="5.8" fill="#ffffff"/><path d="M12 6.8 L13 6.8 L13 13.6 L11.5 13.6" fill="none" stroke="#d7b260" stroke-width="0.9"/><path d="M0.5 0.6 L7.9 3.6 L7.9 10 L6 10.8 L5.4 15.8 L3.2 13.8 L0.5 13.4 Z" fill="url(#fg)" stroke="#d6b25e" stroke-width="0.8"/><path d="M7.7 3.9 L7.7 10 L5.9 10.9 L5.4 15.8" fill="none" stroke="#9d7f33" stroke-width="1.1"/></svg></div>
<div class="t" style="left:126px;top:518.6px;font-size:13px;letter-spacing:0.500px;color:#000">raspberry-pi</div>
</div>
<div class="a" style="left:389px;top:94px;width:14px;height:450px;background:#bab5ab;border-left:1px solid #9e9a91;border-right:1px solid #9e9a91"></div><div class="a thumb" style="left:390px;top:196px;width:12px;height:173px"></div><div class="a btn" style="left:390px;top:95px;width:12px;height:13px"></div><svg class="a" style="left:0;top:0" width="1373" height="1195"><path d="M392.0 103.5 L400.0 103.5 L396.0 98.7 Z" fill="#000"/></svg><div class="a btn" style="left:390px;top:530px;width:12px;height:13px"></div><svg class="a" style="left:0;top:0" width="1373" height="1195"><path d="M392.0 534.5 L400.0 534.5 L396.0 539.3 Z" fill="#000"/></svg>
<div class="a" style="left:389px;top:544px;width:14px;height:626px;background:#bab5ab;border-left:1px solid #9e9a91;border-right:1px solid #9e9a91"></div><div class="a thumb" style="left:390px;top:558px;width:12px;height:598px"></div><div class="a btn" style="left:390px;top:545px;width:12px;height:13px"></div><svg class="a" style="left:0;top:0" width="1373" height="1195"><path d="M392.0 553.5 L400.0 553.5 L396.0 548.7 Z" fill="#000"/></svg><div class="a btn" style="left:390px;top:1156px;width:12px;height:13px"></div><svg class="a" style="left:0;top:0" width="1373" height="1195"><path d="M392.0 1160.5 L400.0 1160.5 L396.0 1165.3 Z" fill="#000"/></svg>
<div class="a" style="left:403px;top:94px;width:1px;height:1076px;background:#dcdad5"></div>
<div class="t" style="left:16px;top:557px;font-size:13px;letter-spacing:0.2px;color:#1c1a9a;line-height:18px">RP2040 device</div>
<svg class="a" style="left:371px;top:562px" width="9" height="8" viewBox="0 0 9 8"><path d="M0.5 1 H8.5 M0.5 3.7 H8.5 M0.5 6.5 H8.5" stroke="#000" stroke-width="1.1"/></svg>
<div class="a" style="left:8px;top:580px;width:381px;height:590px;background:#fff"></div>
<div class="a" style="left:28px;top:581px"><svg width="13" height="16" viewBox="0 0 13 16"><path d="M0.5 0.5 L8.5 0.5 L12.5 4.5 L12.5 15.5 L0.5 15.5 Z" fill="#fdfdfd" stroke="#b4b4b4" stroke-width="1"/><path d="M8.5 0.5 L8.5 4.5 L12.5 4.5" fill="#eaeaea" stroke="#b4b4b4" stroke-width="1"/></svg></div>
<div class="t" style="left:46px;top:581px;font-size:13px;letter-spacing:0.500px;color:#000">gslide01_contact-card-320x240.png</div>
<div class="a" style="left:29px;top:599px"><svg width="13" height="16" viewBox="0 0 13 16"><path d="M0.5 0.5 L8.5 0.5 L12.5 4.5 L12.5 15.5 L0.5 15.5 Z" fill="#fdfdfd" stroke="#3c5ea6" stroke-width="1"/><path d="M8.5 0.5 L8.5 4.5 L12.5 4.5" fill="#eaeaea" stroke="#3c5ea6" stroke-width="1"/><line x1="2" y1="3.5" x2="8" y2="3.5" stroke="#4466bb" stroke-width="1"/><line x1="2" y1="5.5" x2="11" y2="5.5" stroke="#4466bb" stroke-width="1"/><line x1="2" y1="7.5" x2="11" y2="7.5" stroke="#4466bb" stroke-width="1"/><line x1="2" y1="9.5" x2="11" y2="9.5" stroke="#4466bb" stroke-width="1"/><line x1="2" y1="11.5" x2="11" y2="11.5" stroke="#4466bb" stroke-width="1"/><line x1="2" y1="13.5" x2="11" y2="13.5" stroke="#4466bb" stroke-width="1"/></svg></div>
<div class="t" style="left:46px;top:599px;font-size:13px;letter-spacing:0.500px;color:#000">led_heartbeat_counter.txt</div>
<div class="a" style="left:27px;top:617px"><svg width="16" height="16" viewBox="0 0 16 16"><path d="M7.8 0.6 C4.4 0.6 4.6 2.1 4.6 2.1 L4.6 3.9 L8 3.9 L8 4.5 L2.9 4.5 C2.9 4.5 0.6 4.3 0.6 7.9 C0.6 11.4 2.6 11.3 2.6 11.3 L4 11.3 L4 9.5 C4 9.5 3.9 7.6 5.9 7.6 L9.3 7.6 C9.3 7.6 11.1 7.6 11.1 5.8 L11.1 2.6 C11.1 2.6 11.4 0.6 7.8 0.6 Z" fill="#4474b4" stroke="#2e5a92" stroke-width="0.6"/><path d="M8.2 15.4 C11.6 15.4 11.4 13.9 11.4 13.9 L11.4 12.1 L8 12.1 L8 11.5 L13.1 11.5 C13.1 11.5 15.4 11.7 15.4 8.1 C15.4 4.6 13.4 4.7 13.4 4.7 L12 4.7 L12 6.5 C12 6.5 12.1 8.4 10.1 8.4 L6.7 8.4 C6.7 8.4 4.9 8.4 4.9 10.2 L4.9 13.4 C4.9 13.4 4.6 15.4 8.2 15.4 Z" fill="#f6d93e" stroke="#c8a200" stroke-width="0.6"/><circle cx="6.2" cy="2.3" r="0.8" fill="#fff"/><circle cx="9.8" cy="13.7" r="0.8" fill="#fff"/></svg></div>
<div class="t" style="left:46px;top:617px;font-size:13px;letter-spacing:0.500px;color:#000">main.py</div>
<div class="a" style="left:29px;top:635px"><svg width="13" height="16" viewBox="0 0 13 16"><path d="M0.5 0.5 L8.5 0.5 L12.5 4.5 L12.5 15.5 L0.5 15.5 Z" fill="#fdfdfd" stroke="#3c5ea6" stroke-width="1"/><path d="M8.5 0.5 L8.5 4.5 L12.5 4.5" fill="#eaeaea" stroke="#3c5ea6" stroke-width="1"/><line x1="2" y1="3.5" x2="8" y2="3.5" stroke="#4466bb" stroke-width="1"/><line x1="2" y1="5.5" x2="11" y2="5.5" stroke="#4466bb" stroke-width="1"/><line x1="2" y1="7.5" x2="11" y2="7.5" stroke="#4466bb" stroke-width="1"/><line x1="2" y1="9.5" x2="11" y2="9.5" stroke="#4466bb" stroke-width="1"/><line x1="2" y1="11.5" x2="11" y2="11.5" stroke="#4466bb" stroke-width="1"/><line x1="2" y1="13.5" x2="11" y2="13.5" stroke="#4466bb" stroke-width="1"/></svg></div>
<div class="t" style="left:46px;top:635px;font-size:13px;letter-spacing:0.500px;color:#000">oscilloscope_sine_counter.txt</div>
<div class="a" style="left:29px;top:653px"><svg width="13" height="16" viewBox="0 0 13 16"><path d="M0.5 0.5 L8.5 0.5 L12.5 4.5 L12.5 15.5 L0.5 15.5 Z" fill="#fdfdfd" stroke="#3c5ea6" stroke-width="1"/><path d="M8.5 0.5 L8.5 4.5 L12.5 4.5" fill="#eaeaea" stroke="#3c5ea6" stroke-width="1"/><line x1="2" y1="3.5" x2="8" y2="3.5" stroke="#4466bb" stroke-width="1"/><line x1="2" y1="5.5" x2="11" y2="5.5" stroke="#4466bb" stroke-width="1"/><line x1="2" y1="7.5" x2="11" y2="7.5" stroke="#4466bb" stroke-width="1"/><line x1="2" y1="9.5" x2="11" y2="9.5" stroke="#4466bb" stroke-width="1"/><line x1="2" y1="11.5" x2="11" y2="11.5" stroke="#4466bb" stroke-width="1"/><line x1="2" y1="13.5" x2="11" y2="13.5" stroke="#4466bb" stroke-width="1"/></svg></div>
<div class="t" style="left:46px;top:653px;font-size:13px;letter-spacing:0.500px;color:#000">oscilloscope_square_counter.txt</div>
<div class="a" style="left:29px;top:671px"><svg width="13" height="16" viewBox="0 0 13 16"><path d="M0.5 0.5 L8.5 0.5 L12.5 4.5 L12.5 15.5 L0.5 15.5 Z" fill="#fdfdfd" stroke="#3c5ea6" stroke-width="1"/><path d="M8.5 0.5 L8.5 4.5 L12.5 4.5" fill="#eaeaea" stroke="#3c5ea6" stroke-width="1"/><line x1="2" y1="3.5" x2="8" y2="3.5" stroke="#4466bb" stroke-width="1"/><line x1="2" y1="5.5" x2="11" y2="5.5" stroke="#4466bb" stroke-width="1"/><line x1="2" y1="7.5" x2="11" y2="7.5" stroke="#4466bb" stroke-width="1"/><line x1="2" y1="9.5" x2="11" y2="9.5" stroke="#4466bb" stroke-width="1"/><line x1="2" y1="11.5" x2="11" y2="11.5" stroke="#4466bb" stroke-width="1"/><line x1="2" y1="13.5" x2="11" y2="13.5" stroke="#4466bb" stroke-width="1"/></svg></div>
<div class="t" style="left:46px;top:671px;font-size:13px;letter-spacing:0.500px;color:#000">pcb_design_counter.txt</div>
<div class="frame" style="left:412px;top:93px;width:954px;height:627px;box-shadow:inset 1px 1px 0 #f4f3ef"></div>
<div class="tab" style="left:412px;top:69px;width:97px;height:25px;background:#c6c2ba;box-shadow:none"></div>
<div class="t" style="left:421px;top:75px;font-size:13px;letter-spacing:0.4px;color:#000">&lt;untitled&gt;</div>
<svg class="a" style="left:490px;top:78px" width="6" height="6" viewBox="0 0 6 6"><path d="M0.5 0.5 L5.5 5.5 M5.5 0.5 L0.5 5.5" stroke="#d4bcd6" stroke-width="0.8"/></svg>
<div class="tab" style="left:508px;top:65px;width:79px;height:30px"></div>
<div class="t" style="left:516px;top:72px;font-size:13px;color:#000">main.py</div>
<svg class="a" style="left:570px;top:76px" width="6" height="6" viewBox="0 0 6 6"><path d="M0.5 0.5 L5.5 5.5 M5.5 0.5 L0.5 5.5" stroke="#d4bcd6" stroke-width="0.8"/></svg>
<div class="a" style="left:413px;top:95px;width:937px;height:609px;background:#fff"></div>
<div class="a" style="left:413px;top:95px;width:41px;height:609px;background:#e4e4e4"></div>
<div class="a" style="left:413px;top:95px;width:937px;height:604px;overflow:hidden">
<div class="code" style="left:0;top:7px;width:30px;text-align:right;color:#999">1</div>
<div class="code" style="left:46px;top:7px"><span class="cm"># By Darwin Sanoy with help from GitLab Duo</span></div>
<div class="code" style="left:0;top:23px;width:30px;text-align:right;color:#999">2</div>
<div class="code" style="left:46px;top:23px"><span class="cm"># Modified by Michael Friedrich</span></div>
<div class="code" style="left:0;top:39px;width:30px;text-align:right;color:#999">3</div>
<div class="code" style="left:46px;top:39px"><span class="cm"># v1.2 March 2026</span></div>
<div class="code" style="left:0;top:55px;width:30px;text-align:right;color:#999">4</div>
<div class="code" style="left:46px;top:55px"><span class="cm"># Requirements</span></div>
<div class="code" style="left:0;top:71px;width:30px;text-align:right;color:#999">5</div>
<div class="code" style="left:46px;top:71px"><span class="cm"># - Images: PNG, 320x240, 8 or 32 bit depth to display correctly on the Tufty</span></div>
<div class="code" style="left:0;top:87px;width:30px;text-align:right;color:#999">6</div>
<div class="code" style="left:0;top:103px;width:30px;text-align:right;color:#999">7</div>
<div class="code" style="left:46px;top:103px"><span class="kw">import</span> time</div>
<div class="code" style="left:0;top:119px;width:30px;text-align:right;color:#999">8</div>
<div class="code" style="left:46px;top:119px"><span class="kw">import</span> os</div>
<div class="code" style="left:0;top:135px;width:30px;text-align:right;color:#999">9</div>
<div class="code" style="left:46px;top:135px"><span class="kw">import</span> math</div>
<div class="code" style="left:0;top:151px;width:30px;text-align:right;color:#999">10</div>
<div class="code" style="left:46px;top:151px"><span class="kw">from</span> pimoroni <span class="kw">import</span> Button</div>
<div class="code" style="left:0;top:167px;width:30px;text-align:right;color:#999">11</div>
<div class="code" style="left:46px;top:167px"><span class="kw">from</span> picographics <span class="kw">import</span> PicoGraphics, DISPLAY_TUFTY_2040</div>
<div class="code" style="left:0;top:183px;width:30px;text-align:right;color:#999">12</div>
<div class="code" style="left:46px;top:183px"><span class="kw">import</span> pngdec</div>
<div class="code" style="left:0;top:199px;width:30px;text-align:right;color:#999">13</div>
<div class="code" style="left:0;top:215px;width:30px;text-align:right;color:#999"><b>14</b></div>
<div class="code" style="left:46px;top:215px">display = PicoGraphics<span style="color:#0000ee;font-weight:bold">(</span>display=DISPLAY_TUFTY_2040<span style="color:#0000ee;font-weight:bold">)</span></div>
<div class="code" style="left:0;top:231px;width:30px;text-align:right;color:#999">15</div>
<div class="code" style="left:46px;top:231px">display.set_backlight(<span class="nu">0.7</span>)</div>
<div class="code" style="left:0;top:247px;width:30px;text-align:right;color:#999">16</div>
<div class="code" style="left:46px;top:247px">display.set_font(<span class="st">&quot;bitmap8&quot;</span>)</div>
<div class="code" style="left:0;top:263px;width:30px;text-align:right;color:#999">17</div>
<div class="code" style="left:0;top:279px;width:30px;text-align:right;color:#999">18</div>
<div class="code" style="left:46px;top:279px">SLIDE_DURATION = <span class="nu">4</span><span class="cm">  # seconds</span></div>
<div class="code" style="left:0;top:295px;width:30px;text-align:right;color:#999">19</div>
<div class="code" style="left:46px;top:295px">SLIDE_FILENAME_PREPEND = <span class="st">&quot;gslide&quot;</span><span class="cm"> # adjust as needed for your asset file prefix</span></div>
<div class="code" style="left:0;top:311px;width:30px;text-align:right;color:#999">20</div>
<div class="code" style="left:46px;top:311px">BUTTON_REPEAT_TIME = <span class="nu">8</span></div>
<div class="code" style="left:0;top:327px;width:30px;text-align:right;color:#999">21</div>
<div class="code" style="left:0;top:343px;width:30px;text-align:right;color:#999">22</div>
<div class="code" style="left:46px;top:343px">button_a = Button(<span class="nu">7</span>, invert=<span class="kw">False</span>)</div>
<div class="code" style="left:0;top:359px;width:30px;text-align:right;color:#999">23</div>
<div class="code" style="left:46px;top:359px">button_b = Button(<span class="nu">8</span>, invert=<span class="kw">False</span>)</div>
<div class="code" style="left:0;top:375px;width:30px;text-align:right;color:#999">24</div>
<div class="code" style="left:46px;top:375px">button_c = Button(<span class="nu">9</span>, invert=<span class="kw">False</span>)</div>
<div class="code" style="left:0;top:391px;width:30px;text-align:right;color:#999">25</div>
<div class="code" style="left:46px;top:391px">button_up = Button(<span class="nu">22</span>, invert=<span class="kw">False</span>)</div>
<div class="code" style="left:0;top:407px;width:30px;text-align:right;color:#999">26</div>
<div class="code" style="left:46px;top:407px">button_down = Button(<span class="nu">6</span>, invert=<span class="kw">False</span>)</div>
<div class="code" style="left:0;top:423px;width:30px;text-align:right;color:#999">27</div>
<div class="code" style="left:0;top:439px;width:30px;text-align:right;color:#999">28</div>
<div class="code" style="left:46px;top:439px">WHITE = display.create_pen(<span class="nu">255</span>, <span class="nu">255</span>, <span class="nu">255</span>)</div>
<div class="code" style="left:0;top:455px;width:30px;text-align:right;color:#999">29</div>
<div class="code" style="left:46px;top:455px">BLACK = display.create_pen(<span class="nu">0</span>, <span class="nu">0</span>, <span class="nu">0</span>)</div>
<div class="code" style="left:0;top:471px;width:30px;text-align:right;color:#999">30</div>
<div class="code" style="left:46px;top:471px">CYAN = display.create_pen(<span class="nu">0</span>, <span class="nu">255</span>, <span class="nu">255</span>)</div>
<div class="code" style="left:0;top:487px;width:30px;text-align:right;color:#999">31</div>
<div class="code" style="left:46px;top:487px">TEAL = display.create_pen(<span class="nu">0</span>, <span class="nu">255</span>, <span class="nu">255</span>)</div>
<div class="code" style="left:0;top:503px;width:30px;text-align:right;color:#999">32</div>
<div class="code" style="left:46px;top:503px">MAGENTA = display.create_pen(<span class="nu">255</span>, <span class="nu">0</span>, <span class="nu">255</span>)</div>
<div class="code" style="left:0;top:519px;width:30px;text-align:right;color:#999">33</div>
<div class="code" style="left:46px;top:519px">YELLOW = display.create_pen(<span class="nu">255</span>, <span class="nu">255</span>, <span class="nu">0</span>)</div>
<div class="code" style="left:0;top:535px;width:30px;text-align:right;color:#999">34</div>
<div class="code" style="left:46px;top:535px">RED = display.create_pen(<span class="nu">255</span>, <span class="nu">0</span>, <span class="nu">0</span>)</div>
<div class="code" style="left:0;top:551px;width:30px;text-align:right;color:#999">35</div>
<div class="code" style="left:46px;top:551px">GREEN = display.create_pen(<span class="nu">0</span>, <span class="nu">255</span>, <span class="nu">0</span>)</div>
<div class="code" style="left:0;top:567px;width:30px;text-align:right;color:#999">36</div>
<div class="code" style="left:0;top:583px;width:30px;text-align:right;color:#999">37</div>
<div class="code" style="left:46px;top:583px">WIDTH, HEIGHT = display.get_bounds()</div>
<div class="code" style="left:0;top:599px;width:30px;text-align:right;color:#999">38</div>
</div>
<div class="a" style="left:1350px;top:94px;width:14px;height:610px;background:#bab5ab;border-left:1px solid #9e9a91;border-right:1px solid #9e9a91"></div><div class="a thumb" style="left:1351px;top:109px;width:12px;height:59px"></div><div class="a btn" style="left:1351px;top:95px;width:12px;height:13px"></div><svg class="a" style="left:0;top:0" width="1373" height="1195"><path d="M1353.0 103.5 L1361.0 103.5 L1357.0 98.7 Z" fill="#000"/></svg><div class="a btn" style="left:1351px;top:690px;width:12px;height:13px"></div><svg class="a" style="left:0;top:0" width="1373" height="1195"><path d="M1353.0 694.5 L1361.0 694.5 L1357.0 699.3 Z" fill="#000"/></svg>
<div class="a" style="left:413px;top:704px;width:951px;height:14px;background:#bab5ab;border-top:1px solid #9e9a91;border-bottom:1px solid #9e9a91"></div><div class="a thumb" style="left:428px;top:705px;width:922px;height:12px;border-bottom:none;border-right:1px solid #9e9a91"></div><div class="a" style="left:414px;top:705px;width:1px;height:12px;background:#9e9a91"></div><div class="a btn" style="left:415px;top:705px;width:13px;height:12px"></div><svg class="a" style="left:0;top:0" width="1373" height="1195"><path d="M423.5 707.0 L423.5 715.0 L418.7 711.0 Z" fill="#000"/></svg><div class="a" style="left:428px;top:705px;width:1px;height:12px;background:#9e9a91"></div><div class="a btn" style="left:1350px;top:705px;width:13px;height:12px"></div><svg class="a" style="left:0;top:0" width="1373" height="1195"><path d="M1354.5 707.0 L1354.5 715.0 L1359.3 711.0 Z" fill="#000"/></svg>
<div class="a" style="left:1364px;top:94px;width:1px;height:624px;background:#dcdad5"></div>
<div class="frame" style="left:412px;top:755px;width:954px;height:416px;background:#fff"></div>
<div class="tab" style="left:412px;top:727px;width:62px;height:30px"></div>
<div class="t" style="left:421px;top:733px;font-size:13px;color:#000">Shell</div>
<svg class="a" style="left:457px;top:739px" width="6" height="6" viewBox="0 0 6 6"><path d="M0.5 0.5 L5.5 5.5 M5.5 0.5 L0.5 5.5" stroke="#d4bcd6" stroke-width="0.8"/></svg>
<div class="code" style="left:418px;top:759px"><span style="color:#7f0080;font-weight:bold">&gt;&gt;&gt;</span> <span style="color:#999">%Run -c $EDITOR_CONTENT</span></div>
<div class="a" style="left:434px;top:797px;font-family:'Liberation Mono', monospace;font-size:11.67px;line-height:13px;white-space:pre;color:#000">MPY: soft reboot
Starting GitLab Tufty 2040 Badge slideshow...
Found 1 slide images
Slide duration: 4 seconds</div>
<div class="a" style="left:1350px;top:756px;width:14px;height:414px;background:#bab5ab;border-left:1px solid #9e9a91;border-right:1px solid #9e9a91"></div><div class="a thumb" style="left:1351px;top:771px;width:12px;height:385px"></div><div class="a btn" style="left:1351px;top:757px;width:12px;height:13px"></div><svg class="a" style="left:0;top:0" width="1373" height="1195"><path d="M1353.0 765.5 L1361.0 765.5 L1357.0 760.7 Z" fill="#000"/></svg><div class="a btn" style="left:1351px;top:1156px;width:12px;height:13px"></div><svg class="a" style="left:0;top:0" width="1373" height="1195"><path d="M1353.0 1160.5 L1361.0 1160.5 L1357.0 1165.3 Z" fill="#000"/></svg>
<div class="a" style="left:1364px;top:756px;width:1px;height:414px;background:#dcdad5"></div>
<div class="t" style="left:914px;top:1175px;font-size:13px;letter-spacing:0.3px;color:#000">MicroPython (RP2040)</div>
<div class="a" style="left:1061px;top:1183px;width:3px;height:3px;border-radius:50%;background:#000"></div>
<div class="t" style="left:1073px;top:1175px;font-size:13px;letter-spacing:0.13px;color:#000">Board in FS mode @ /dev/cu.usbmodem2101</div>
<svg class="a" style="left:1352px;top:1181px" width="9" height="8" viewBox="0 0 9 8"><path d="M0.5 1 H8.5 M0.5 3.7 H8.5 M0.5 6.5 H8.5" stroke="#000" stroke-width="1.1"/></svg>
<div class="a" style="left:378px;top:378px;width:206px;height:320px;border-radius:10px;background:rgba(62,62,62,0.86);backdrop-filter:blur(2.5px);box-shadow:0 0 0 0.5px rgba(0,0,0,0.35)"></div>
<div class="a" style="left:394px;top:484px;width:174px;height:1px;background:#747474"></div>
<div class="a" style="left:383px;top:490px;width:196px;height:24px;border-radius:5px;background:#4a7ee2"></div>
<div class="a" style="left:394px;top:663px;width:174px;height:1px;background:#747474"></div>
<div class="mi" style="top:387px;color:#ebebeb">Open in Thonny</div>
<div class="mi" style="top:411px;color:#ebebeb">Open in default external app</div>
<div class="mi" style="top:435px;color:#ebebeb">Configure .py files...</div>
<div class="mi" style="top:459px;color:#ebebeb">Show hidden files</div>
<div class="mi" style="top:494px;color:#ffffff">Upload to /</div>
<div class="mi" style="top:518px;color:#ebebeb">New file...</div>
<div class="mi" style="top:542px;color:#ebebeb">New directory...</div>
<div class="mi" style="top:566px;color:#ebebeb">Cut</div>
<div class="mi" style="top:590px;color:#ebebeb">Copy</div>
<div class="mi" style="top:614px;color:#8c8c8c">Paste</div>
<div class="mi" style="top:638px;color:#ebebeb">Move to Trash</div>
<div class="mi" style="top:673px;color:#ebebeb">Properties</div>
</div></body></html>
